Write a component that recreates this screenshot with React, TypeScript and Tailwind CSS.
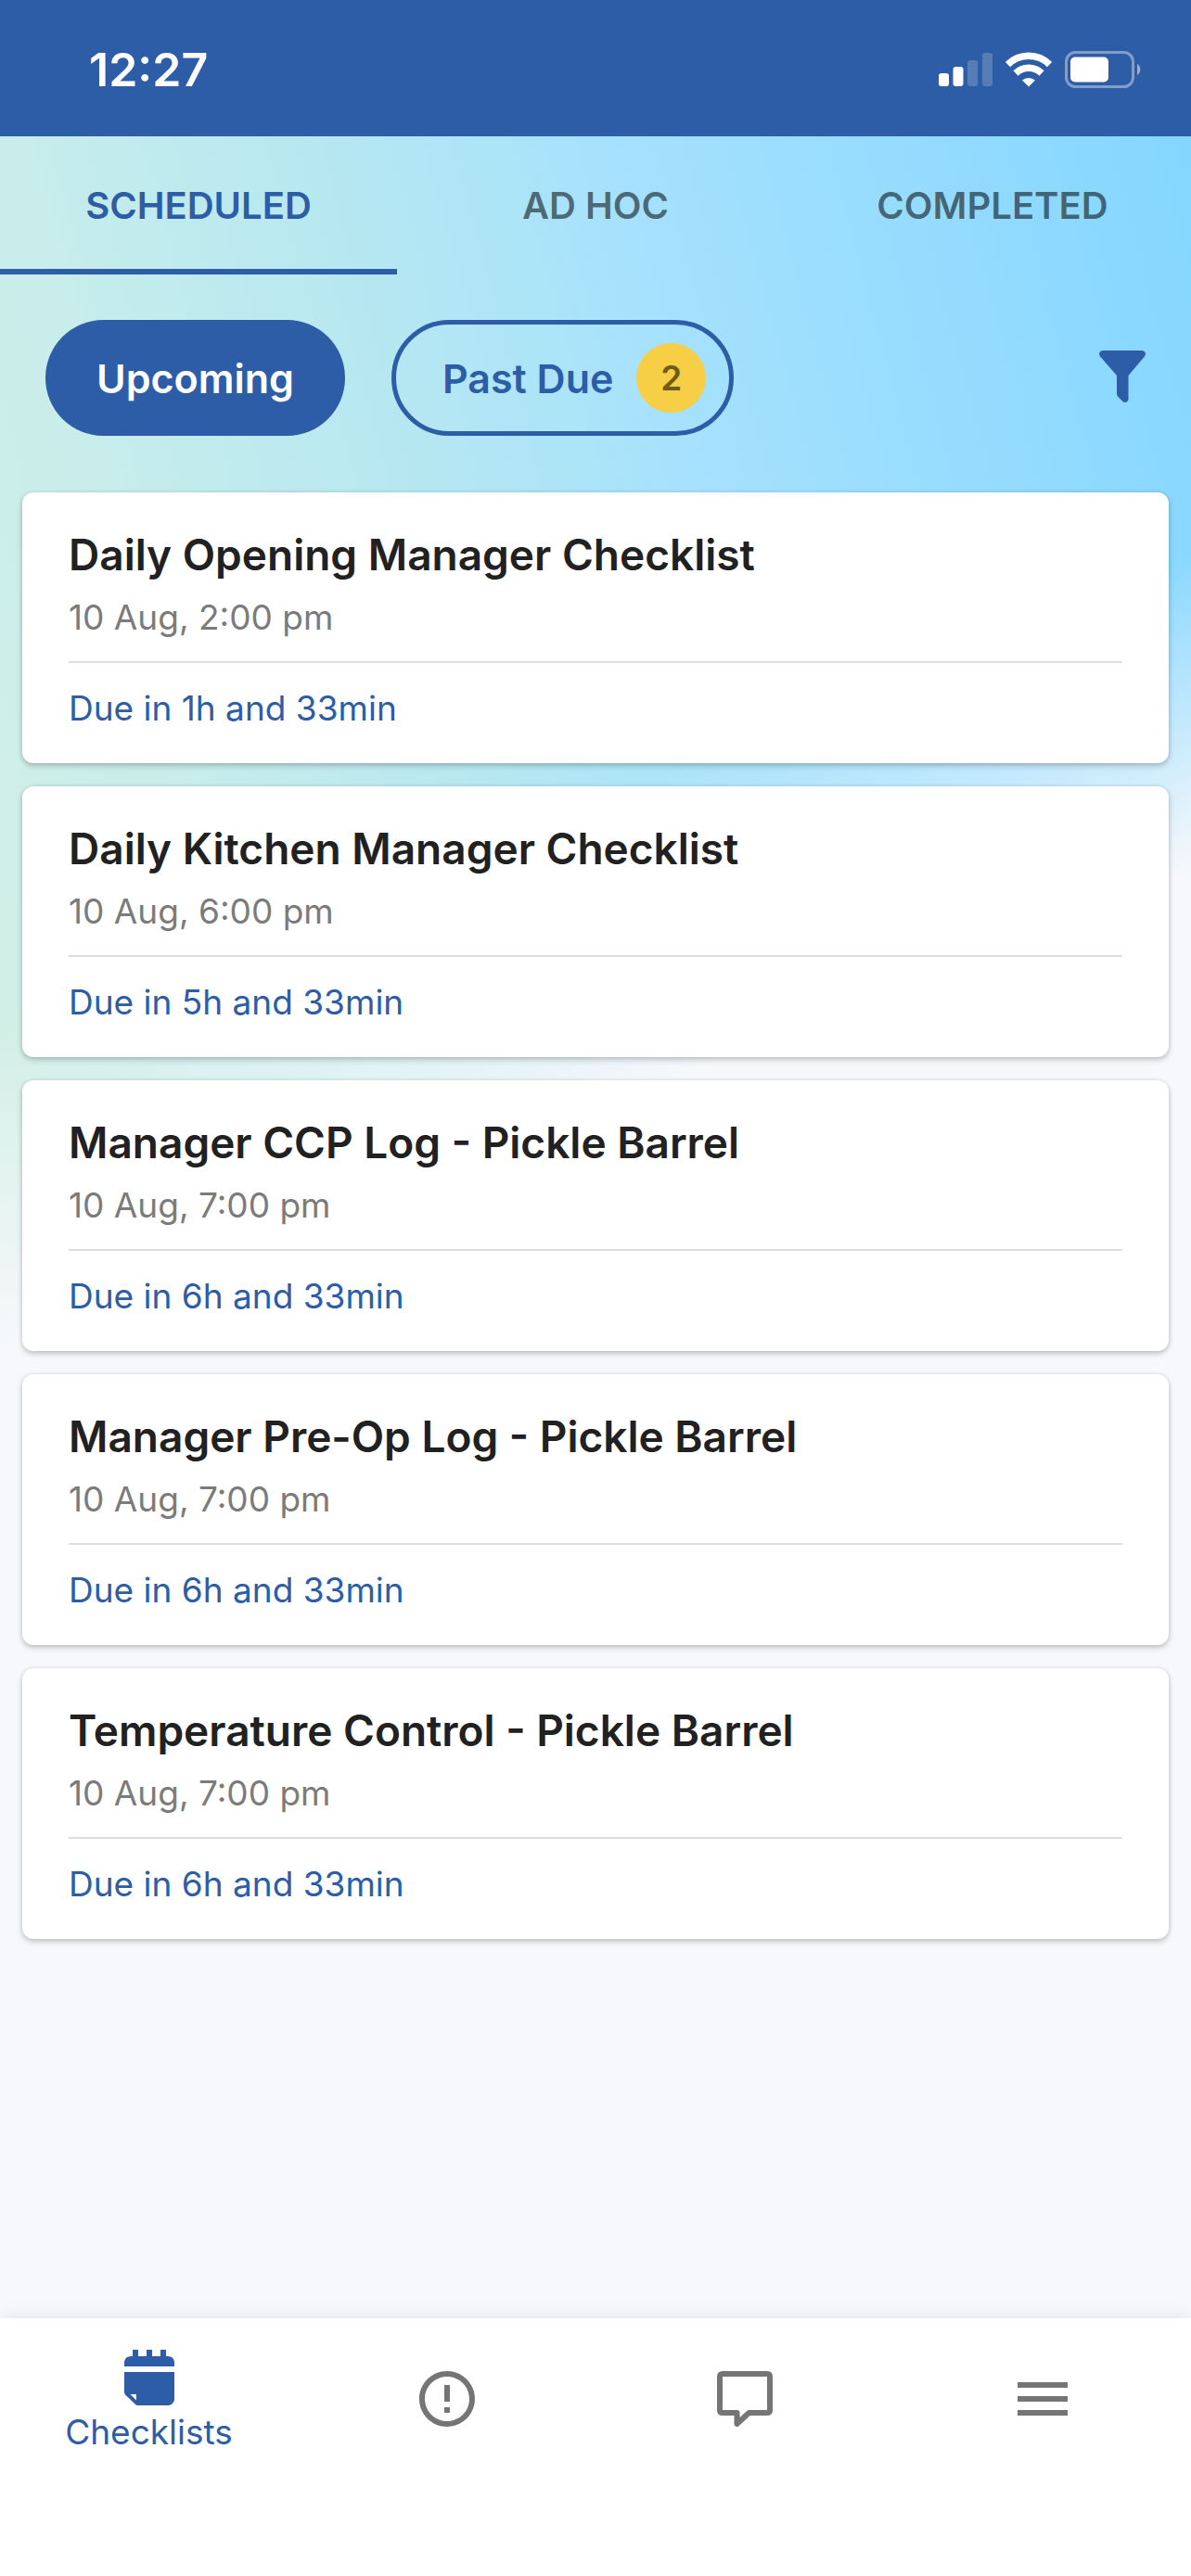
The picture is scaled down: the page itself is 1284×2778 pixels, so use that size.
import { clsx } from 'clsx';
import { MdErrorOutline, MdMenu } from 'react-icons/md';

interface Checklist {
  title: string;
  date: string;
  due: string;
}

const TABS = ['Scheduled', 'Ad hoc', 'Completed'];

const CHECKLISTS: Checklist[] = [
  { title: 'Daily Opening Manager Checklist', date: '10 Aug, 2:00 pm', due: 'Due in 1h and 33min' },
  { title: 'Daily Kitchen Manager Checklist', date: '10 Aug, 6:00 pm', due: 'Due in 5h and 33min' },
  { title: 'Manager CCP Log - Pickle Barrel', date: '10 Aug, 7:00 pm', due: 'Due in 6h and 33min' },
  { title: 'Manager Pre-Op Log - Pickle Barrel', date: '10 Aug, 7:00 pm', due: 'Due in 6h and 33min' },
  { title: 'Temperature Control - Pickle Barrel', date: '10 Aug, 7:00 pm', due: 'Due in 6h and 33min' },
];

export default function App() {
  return (
    <div className="flex min-h-screen flex-col bg-[#f7f8fb] font-['Inter',sans-serif]">
      <StatusBar />
      <main className="flex-1 bg-[linear-gradient(158deg,transparent_46%,#f7f8fb_62%),linear-gradient(75deg,#d8f1e3_0%,#d2efe6_10%,#c8edeb_25%,#b7e8f0_44%,#a5e1fd_64%,#84d6ff_100%)] bg-[length:100%_1600px] bg-no-repeat">
        <Tabs />
        <Filters />
        <ul className="flex flex-col gap-[25px] px-6 pb-12">
          {CHECKLISTS.map((item) => (
            <ChecklistCard key={item.title} item={item} />
          ))}
        </ul>
      </main>
      <BottomNav />
    </div>
  );
}

function StatusBar() {
  return (
    <header className="flex h-[147px] items-center justify-between bg-[#2d5da6] pt-[2px] pr-[52px] pl-24 text-white">
      <span className="text-[50px] leading-[60px] font-semibold">12:27</span>
      <div className="flex items-center gap-[14px]">
        <svg viewBox="0 0 58 38" className="h-[38px] w-[58px]" fill="currentColor" aria-hidden="true">
          <rect x="0" y="23" width="11" height="14" rx="3" />
          <rect x="15.500" y="16" width="11" height="21" rx="3" />
          <rect x="31" y="9" width="11" height="28" rx="3" opacity=".2" />
          <rect x="47" y="1" width="11" height="36" rx="3" opacity=".2" />
        </svg>
        <svg viewBox="0 0 50 38" className="h-[38px] w-[50px]" aria-hidden="true">
          <g fill="none" stroke="currentColor" strokeWidth="7.500">
            <path d="M2.500 13.500a32 32 0 0 1 45 0" />
            <path d="M11 23a20 20 0 0 1 28 0" />
          </g>
          <path d="M18 30.500a11 11 0 0 1 14 0L25 37.500Z" fill="currentColor" />
        </svg>
        <svg viewBox="0 0 84 40" className="h-10 w-[84px]" aria-hidden="true">
          <rect x="1.500" y="1.500" width="72" height="37" rx="10" fill="none" stroke="currentColor" strokeWidth="3" opacity=".4" />
          <rect x="6" y="6.500" width="41" height="27" rx="5" fill="currentColor" />
          <path d="M78 14a7 7 0 0 1 0 12Z" fill="currentColor" opacity=".5" />
        </svg>
      </div>
    </header>
  );
}

function Tabs() {
  return (
    <div role="tablist" className="grid grid-cols-3">
      {TABS.map((tab, i) => (
        <button
          key={tab}
          type="button"
          role="tab"
          aria-selected={i === 0}
          className={clsx(
            'h-[149px] border-y-[6px] border-t-transparent text-[40px] leading-[48px] font-semibold uppercase',
            i === 0 ? 'border-b-[#2d5da6] text-[#2d5da6]' : 'border-b-transparent text-black/55',
          )}
        >
          {tab}
        </button>
      ))}
    </div>
  );
}

function Filters() {
  return (
    <div className="flex items-center gap-[50px] px-[49px] pt-[49px] pb-[61px] text-[43px] leading-[50px] font-semibold">
      <button type="button" className="h-[125px] rounded-full bg-[#2d5da6] px-[55px] text-white">
        Upcoming
      </button>
      <button
        type="button"
        className="flex h-[125px] items-center gap-[25px] rounded-full border-[5px] border-[#2d5da6] pr-[25px] pl-[50px] text-[#2d5da6]"
      >
        Past Due
        <span className="flex size-[75px] items-center justify-center rounded-full bg-[#f7cf46] text-[37px] text-[#6f5c1a]">
          2
        </span>
      </button>
      <button type="button" aria-label="Filter" className="ml-auto text-[#2d5da6]">
        <svg viewBox="0 2 50 60" className="h-[60px] w-[50px]" fill="currentColor" aria-hidden="true">
          <path d="M4 2H46Q50 2.500 50 6Q49.500 8 48 9.500L31.500 29V55Q30.500 58 27.500 58L25.500 57L20 51.500Q19 50 19 48.500V29L2 9.500Q.500 8 0 6Q0 2.500 4 2Z" />
        </svg>
      </button>
    </div>
  );
}

function ChecklistCard({ item }: { item: Checklist }) {
  return (
    <li className="rounded-[12px] bg-white px-[50px] pt-10 pb-[34px] shadow-[0_3px_6px_rgba(0,0,0,0.2),0_0_4px_rgba(0,0,0,0.1)]">
      <h2 className="text-[46px] leading-[54px] font-semibold text-[#212121]">{item.title}</h2>
      <p className="pt-4 pb-[22px] text-[37px] leading-[50px] text-[#7b7b7b]">{item.date}</p>
      <p className="border-t-2 border-[#dedede] pt-[24px] text-[37px] leading-[50px] text-[#2d5da6]">{item.due}</p>
    </li>
  );
}

function BottomNav() {
  return (
    <nav className="bg-white pb-[104px] shadow-[0_-2px_16px_rgba(0,0,0,0.08)]">
      <div className="grid h-[174px] grid-cols-4 text-[#757575]">
        <a href="#checklists" aria-current="page" className="flex flex-col items-center justify-center gap-1 pt-2 text-[#2d5da6]">
          <CalendarIcon />
          <span className="text-[37px] leading-[50px]">Checklists</span>
        </a>
        <a href="#issues" aria-label="Issues" className="flex items-center justify-center">
          <MdErrorOutline className="size-[72px]" />
        </a>
        <a href="#messages" aria-label="Messages" className="flex items-center justify-center">
          <MessageIcon />
        </a>
        <a href="#menu" aria-label="Menu" className="flex items-center justify-center">
          <MdMenu className="size-[72px]" />
        </a>
      </div>
    </nav>
  );
}

function CalendarIcon() {
  return (
    <svg viewBox="0 0 54 60" className="h-[60px] w-[54px]" fill="currentColor" aria-hidden="true">
      <path d="M0 18V13Q1 7 7 7H9V0H15V7H24V0H30V7H39V0H45V7H47Q53 7 54 13V18Z" />
      <path fillRule="evenodd" d="M0 24H54V54Q53 59 48 60H14Q12 59.500 11 58L1 48.500Q0 47 0 46ZM6.500 48L13 54.500V48Z" />
    </svg>
  );
}

function MessageIcon() {
  return (
    <svg
      viewBox="0 0 60 60"
      className="size-[60px]"
      fill="none"
      stroke="currentColor"
      strokeWidth="6"
      strokeLinejoin="round"
      aria-hidden="true"
    >
      <path d="M6 3H54Q57 3 57 6V42Q57 45 54 45H34.500L21.500 57V45H6Q3 45 3 42V6Q3 3 6 3Z" />
    </svg>
  );
}
